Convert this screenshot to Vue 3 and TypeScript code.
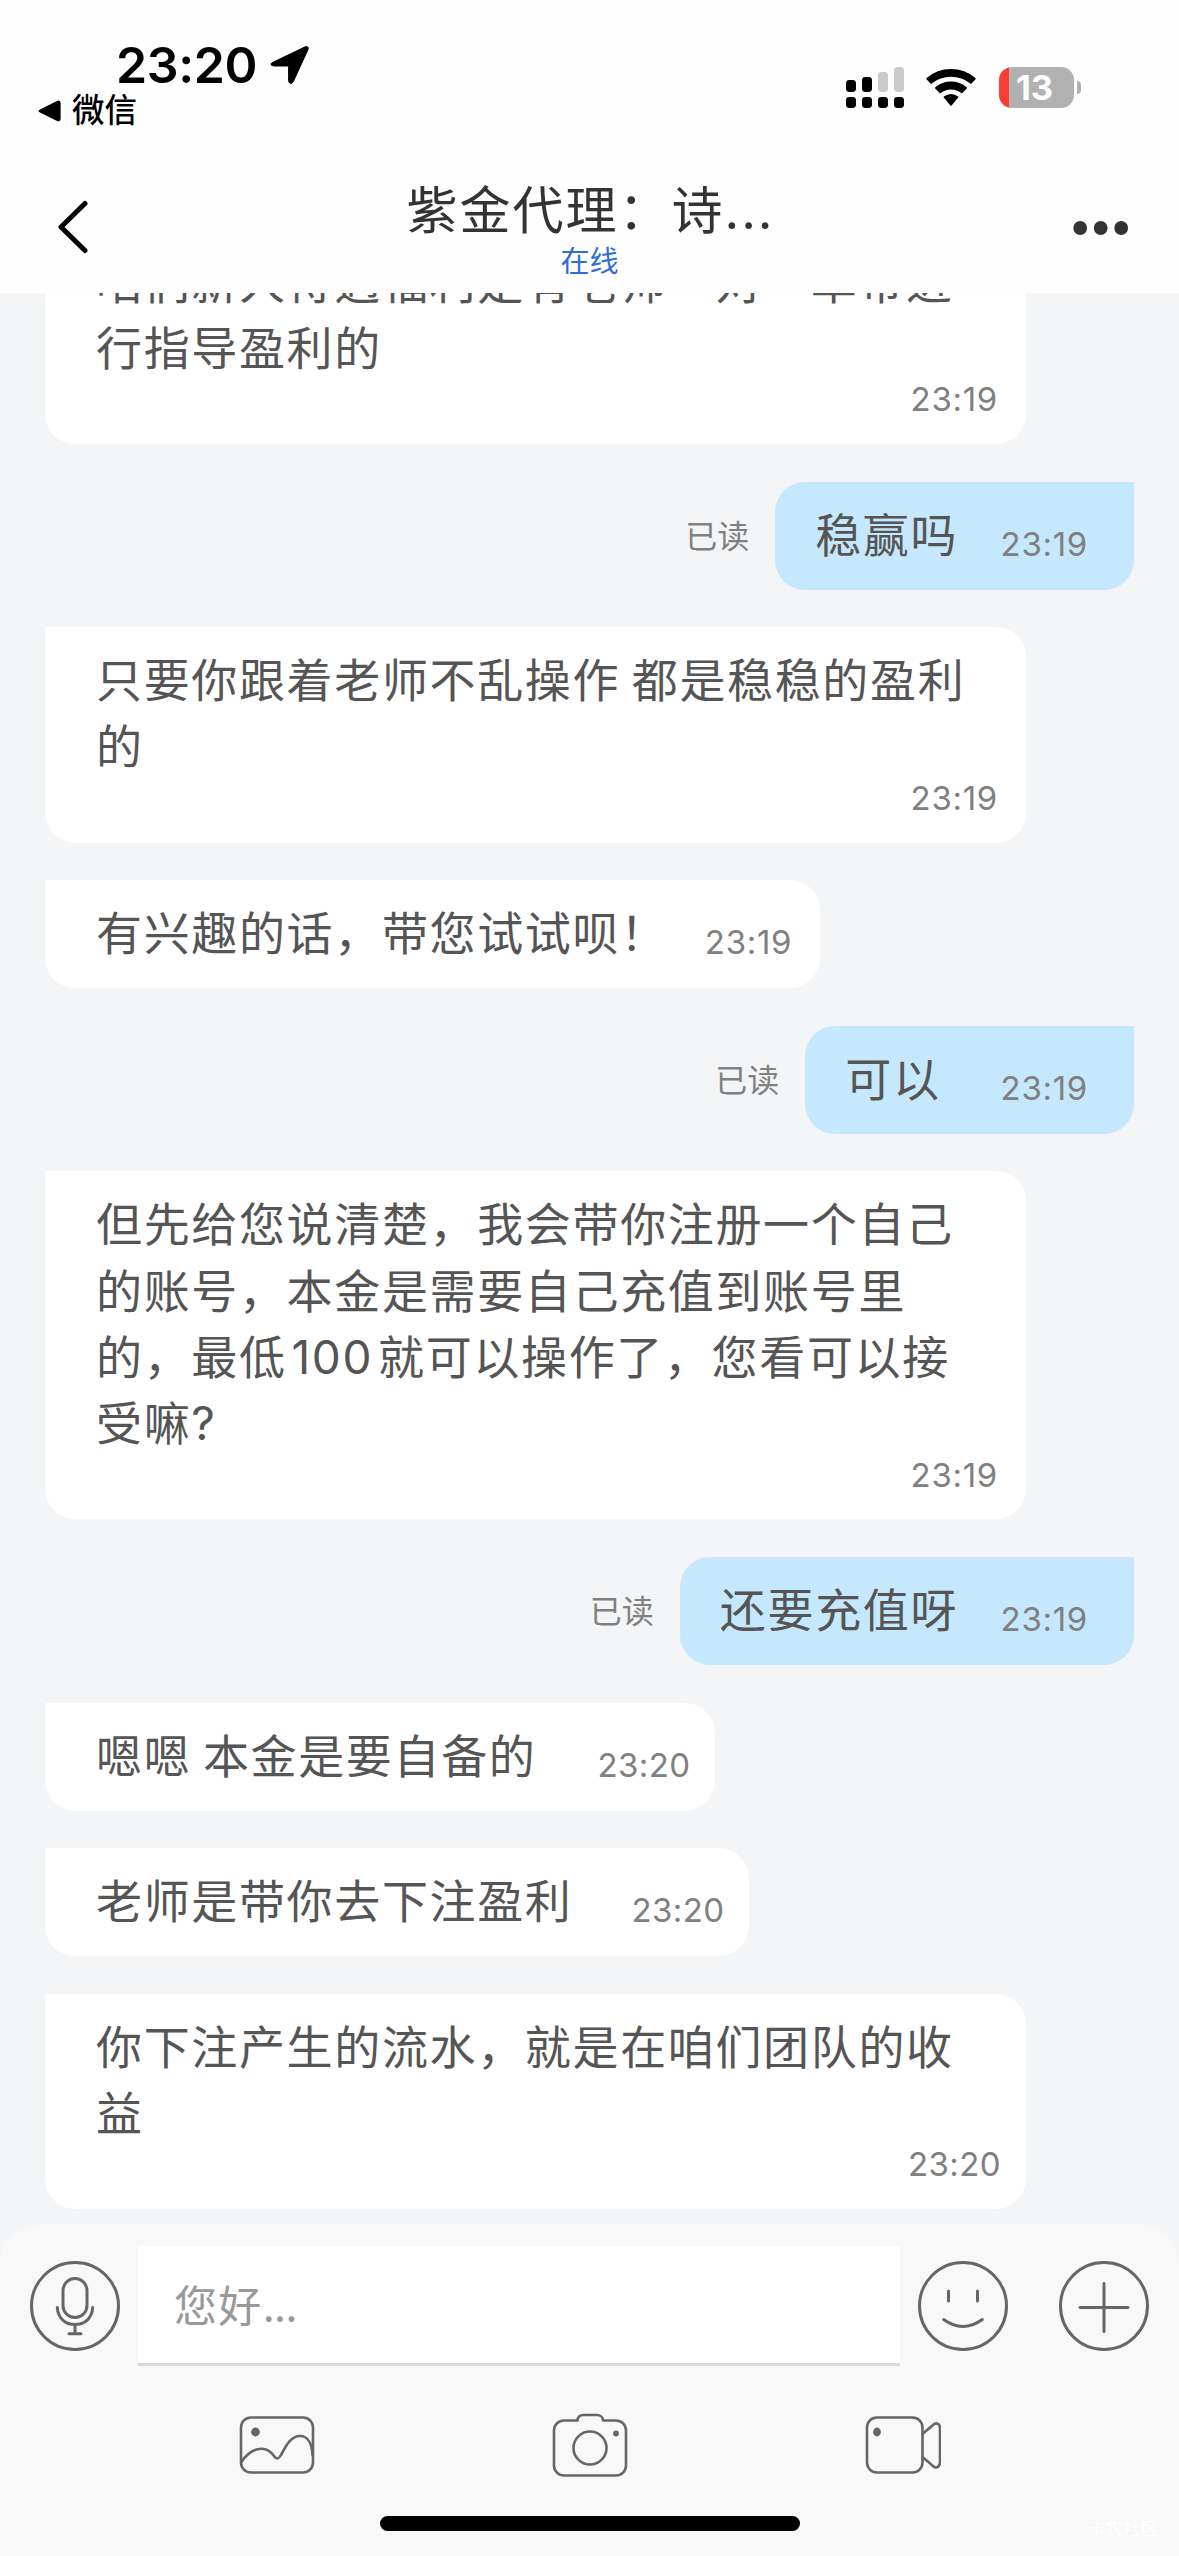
<script setup lang="ts">
interface Message {
  mine: boolean
  lines: string[]
  time: string
  gap?: number
}

const messages: Message[] = [
  { mine: false, lines: ['咱们新人待遇福利是有老师一对一单带进', '行指导盈利的'], time: '23:19' },
  { mine: true, lines: ['稳赢吗'], time: '23:19', gap: 42.5 },
  { mine: false, lines: ['只要你跟着老师不乱操作 都是稳稳的盈利', '的'], time: '23:19' },
  { mine: false, lines: ['有兴趣的话，带您试试呗！'], time: '23:19', gap: 37 },
  { mine: true, lines: ['可以'], time: '23:19', gap: 60 },
  {
    mine: false,
    lines: ['但先给您说清楚，我会带你注册一个自己', '的账号，本金是需要自己充值到账号里', '的，最低 100 就可以操作了，您看可以接', '受嘛?'],
    time: '23:19',
  },
  { mine: true, lines: ['还要充值呀'], time: '23:19', gap: 42.5 },
  { mine: false, lines: ['嗯嗯 本金是要自备的'], time: '23:20', gap: 61 },
  { mine: false, lines: ['老师是带你去下注盈利'], time: '23:20', gap: 59 },
  { mine: false, lines: ['你下注产生的流水，就是在咱们团队的收', '益'], time: '23:20' },
]

const hasDigits = (line: string) => /\d/.test(line)
</script>

<template>
  <div class="screen" lang="zh-CN">
    <header class="top">
      <div class="status">
        <div class="status-left">
          <div class="clock">
            <span class="clock-text">23:20</span>
            <svg class="location" width="40" height="40" viewBox="0 0 40 40">
              <path d="M3.2 17.2 35.2 1.8Q38.8.6 38 4.6L23.2 36.8Q21.6 39.6 19.4 37.8 18.6 37 18.6 35.2V22.2Q18.6 21 17.4 21H4.2Q.6 20.8 1 18.8 1.4 17.8 3.2 17.2Z" stroke="#000" stroke-width="1" />
            </svg>
          </div>
          <div class="return-app">
            <svg width="23" height="22" viewBox="0 0 23 22">
              <path d="M2 9.4 19 .9Q22.4-.2 22.6 3V19Q22.4 22.2 19 21.1L2 12.6Q-1 11 2 9.4Z" />
            </svg>
            <span>微信</span>
          </div>
        </div>
        <div class="status-right">
          <svg width="58" height="42" viewBox="0 0 58 42">
            <rect x="0" y="13" width="10" height="12" rx="3.4" />
            <rect x="16" y="10" width="10" height="15" rx="3.4" />
            <rect x="32" y="5" width="10" height="20" rx="3.4" fill="#cbcbcb" />
            <rect x="48" y="0" width="10" height="25" rx="3.4" fill="#cbcbcb" />
            <rect x="0" y="30" width="10" height="11" rx="3.4" />
            <rect x="16" y="30" width="10" height="11" rx="3.4" />
            <rect x="32" y="30" width="10" height="11" rx="3.4" />
            <rect x="48" y="30" width="10" height="11" rx="3.4" />
          </svg>
          <svg class="wifi" width="50" height="38" viewBox="0 0 50 38">
            <path d="M.5 10.2Q0 9.6.6 9 11 0 25 0 39 0 49.400 9 50 9.600 49.500 10.200L45.600 14.400Q45 15 44.300 14.400 36 7.800 25 7.800 14 7.800 5.700 14.400 5 15 4.400 14.400Z" />
            <path d="M9.200 19.400Q8.700 18.800 9.300 18.200 16 12.600 25 12.600 34 12.600 40.700 18.200 41.300 18.800 40.800 19.400L36.400 23.900Q35.800 24.400 35.200 23.900 31 20.400 25 20.400 19 20.400 14.800 23.900 14.200 24.400 13.600 23.900Z" />
            <path d="M17.800 28.600Q17.300 28 17.900 27.500 21 25 25 25 29 25 32.100 27.500 32.700 28 32.200 28.600L25.600 36.400Q25 37 24.400 36.400Z" />
          </svg>
          <div class="battery">
            <div class="battery-body"><span>13</span></div>
            <div class="battery-cap"></div>
          </div>
        </div>
      </div>
      <div class="nav">
        <div class="side">
          <svg width="32" height="54" viewBox="0 0 32 54">
            <path d="M28 3.500 4 27 28 50.500" fill="none" stroke="#000" stroke-width="5" stroke-linecap="round" stroke-linejoin="round" />
          </svg>
        </div>
        <div class="heading">
          <h1>紫金代理：诗...</h1>
          <p>在线</p>
        </div>
        <div class="side end">
          <svg width="56" height="16" viewBox="0 0 56 16" fill="#333">
            <circle cx="7.200" cy="8" r="6.900" />
            <circle cx="27.700" cy="8" r="6.900" />
            <circle cx="48.200" cy="8" r="6.900" />
          </svg>
        </div>
      </div>
    </header>

    <main class="chat">
      <div v-for="(m, i) in messages" :key="i" class="row" :class="{ mine: m.mine }">
        <span v-if="m.mine" class="read">已读</span>
        <div class="bubble" :class="{ multi: m.lines.length > 1 }">
          <div class="text">
            <div v-for="line in m.lines" :key="line" class="line" :class="{ digits: hasDigits(line) }">{{ line }}</div>
          </div>
          <time :class="{ late: m.time.endsWith('0') }" :style="{ marginLeft: (m.gap ?? 0) + 'px' }">{{ m.time }}</time>
        </div>
      </div>
    </main>

    <footer class="composer">
      <div class="entry">
        <svg width="90" height="90" viewBox="0 0 90 90" class="icon">
          <circle cx="45" cy="45" r="43.500" />
          <rect x="33" y="17.500" width="24" height="39" rx="12" />
          <path d="M27.300 46.500C28 58 36 63.500 45 63.500S62 58 62.700 46.500M45 63.500V72.500M39 72.700H51" />
        </svg>
        <div class="field">您好<span class="ellipsis">...</span></div>
        <svg width="90" height="90" viewBox="0 0 90 90" class="icon">
          <circle cx="45" cy="45" r="43.500" />
          <path d="M30.500 30V40M59.500 30V40M25.700 58.500Q45 72.500 64.300 58.500" />
        </svg>
        <svg width="90" height="90" viewBox="0 0 90 90" class="icon plus">
          <circle cx="45" cy="45" r="43.500" />
          <path d="M45 22.500V70.500M21 46.500H69" />
        </svg>
      </div>
      <div class="tools">
        <div class="tool">
          <svg width="76" height="66" viewBox="0 0 76 66" class="icon thin">
            <rect x="2" y="5.500" width="72" height="55" rx="10" />
            <path d="M2.500 50C11 37 26 31 35 44Q38.500 49.500 42 43C46 36 51 24 61 24C69 24 73 32 73.500 43" />
            <circle cx="16.500" cy="20" r="4.400" class="dot" />
          </svg>
        </div>
        <div class="tool">
          <svg width="76" height="66" viewBox="0 0 76 66" class="icon thin">
            <path d="M12 8.500H25.500C25.500 5 28 3 31 3H45C48 3 51 5 51 8.500H64A10 10 0 0 1 74 18.500V53.500A10 10 0 0 1 64 63.500H12A10 10 0 0 1 2 53.500V18.500A10 10 0 0 1 12 8.500Z" />
            <circle cx="38" cy="36" r="16.500" />
            <circle cx="64" cy="21.500" r="2.900" class="dot" />
          </svg>
        </div>
        <div class="tool">
          <svg width="76" height="66" viewBox="0 0 76 66" class="icon thin">
            <rect x="2" y="5.500" width="55.500" height="55" rx="10" />
            <path d="M57.500 22 68 13C71 10 75 11.500 75 16V50C75 55 71 57 68 54L57.500 45" />
            <ellipse cx="12" cy="20" rx="3.900" ry="4.400" class="dot" />
          </svg>
        </div>
      </div>
      <div class="home"></div>
      <span class="community">卡农社区</span>
    </footer>
  </div>
</template>

<style>
body {
  margin: 0;
}
</style>

<style scoped>
.screen {
  display: flex;
  flex-direction: column;
  width: 1179px;
  height: 2556px;
  overflow: hidden;
  background: #f3f5f7;
  font-family: Inter, "Noto Sans CJK SC", sans-serif;
}
.top {
  flex: none;
  height: 293px;
  background: #fefefe;
}
.status {
  display: flex;
  justify-content: space-between;
  height: 166px;
}
.status-left {
  padding: 38px 0 0 38px;
}
.clock {
  display: flex;
  align-items: center;
  gap: 13px;
  height: 54px;
  padding-left: 78px;
}
.clock-text {
  font-size: 50px;
  font-weight: 600;
  letter-spacing: -0.4px;
}
.return-app {
  display: flex;
  align-items: center;
  gap: 11px;
  height: 38px;
  font-size: 32.500px;
  font-weight: 500;
  line-height: 38px;
}
.status-right {
  display: flex;
  align-items: flex-start;
  padding: 67px 98px 0 0;
}
.wifi {
  margin: 2px 23px 0 22px;
}
.battery {
  display: flex;
  align-items: center;
  gap: 3px;
}
.battery-body {
  width: 75px;
  height: 41px;
  padding-right: 4px;
  box-sizing: border-box;
  border-radius: 13px;
  background: linear-gradient(90deg, #fc3d32 10px, #b1b1b1 10px);
  color: #fff;
  font-size: 34.500px;
  font-weight: 700;
  line-height: 41px;
  text-align: center;
}
.battery-cap {
  width: 4px;
  height: 13px;
  border-radius: 0 5px 5px 0;
  background: #b1b1b1;
}
.nav {
  display: flex;
  height: 127px;
  padding: 0 50px 0 57px;
}
.side {
  flex: 1;
  padding-top: 34px;
}
.side.end {
  padding-top: 54px;
  text-align: right;
}
.heading {
  margin-right: 7px;
  text-align: center;
}
h1 {
  margin: 0;
  padding: 10px 0 0 2px;
  color: #333;
  font-size: 51px;
  font-weight: 400;
  line-height: 70px;
  letter-spacing: 2px;
}
.heading p {
  margin: 0;
  color: #2f6dd5;
  font-size: 29px;
  line-height: 32px;
}
.chat {
  display: flex;
  flex: none;
  flex-direction: column;
  gap: 37.6px;
  height: 1932px;
  overflow: hidden;
  padding: 0 45px;
  box-sizing: border-box;
}
.row {
  display: flex;
  flex: none;
  align-items: center;
}
.row:first-child {
  margin-top: -64.4px;
}
.row.mine {
  justify-content: flex-end;
}
.read {
  margin-right: 26px;
  padding-bottom: 4px;
  color: #808080;
  font-size: 32px;
}
.bubble {
  display: flex;
  box-sizing: border-box;
  height: 108px;
  padding: 20px 28px 0 51px;
  border-radius: 0 30px 30px 30px;
  background: #fff;
}
.bubble.multi {
  flex-direction: column;
  width: 981px;
  height: auto;
}
.mine .bubble {
  padding: 20px 46px 0 40px;
  border-radius: 30px 0 30px 30px;
  background: #c5e8fd;
}
.line {
  color: #555;
  font-size: 46px;
  line-height: 66.3px;
  letter-spacing: 1.65px;
  word-spacing: -3px;
  white-space: nowrap;
}
.line.digits {
  word-spacing: -9.7px;
}
time {
  padding-top: 22px;
  color: #808080;
  font-size: 33px;
  line-height: 40px;
  letter-spacing: 0.7px;
}
time.late {
  margin-right: -3px;
  letter-spacing: 0.4px;
}
.multi time {
  align-self: flex-end;
  height: 62.800px;
  padding-top: 0;
  line-height: 36px;
}
.composer {
  position: relative;
  flex: 1;
  border-radius: 38px 38px 0 0;
  background: #f8f8f8;
}
.entry {
  display: flex;
  align-items: flex-start;
  padding: 21px 30px 0;
}
.icon {
  flex: none;
  margin-top: 15px;
  fill: none;
  stroke: #666;
  stroke-width: 3;
  stroke-linecap: round;
  stroke-linejoin: round;
}
.icon.thin {
  margin: 0;
  stroke-width: 2.600;
}
.icon .dot {
  fill: #666;
  stroke: none;
}
.field {
  width: 762px;
  height: 120px;
  margin: 0 18px;
  padding: 0 36px;
  border-bottom: 3px solid #d8d8d8;
  box-sizing: border-box;
  background: #fff;
  color: #999;
  font-size: 43px;
  line-height: 120px;
  letter-spacing: 1.200px;
}
.ellipsis {
  letter-spacing: -1px;
}
.plus {
  margin-left: 51px;
}
.tools {
  display: flex;
  padding: 46px 120px 0;
}
.tool {
  display: flex;
  flex: 1;
  justify-content: center;
}
.home {
  width: 420px;
  height: 15px;
  margin: 38px 0 0 380px;
  border-radius: 8px;
  background: #000;
}
.community {
  position: absolute;
  right: 21px;
  bottom: 16px;
  color: #fff;
  font-size: 17.500px;
}
</style>
